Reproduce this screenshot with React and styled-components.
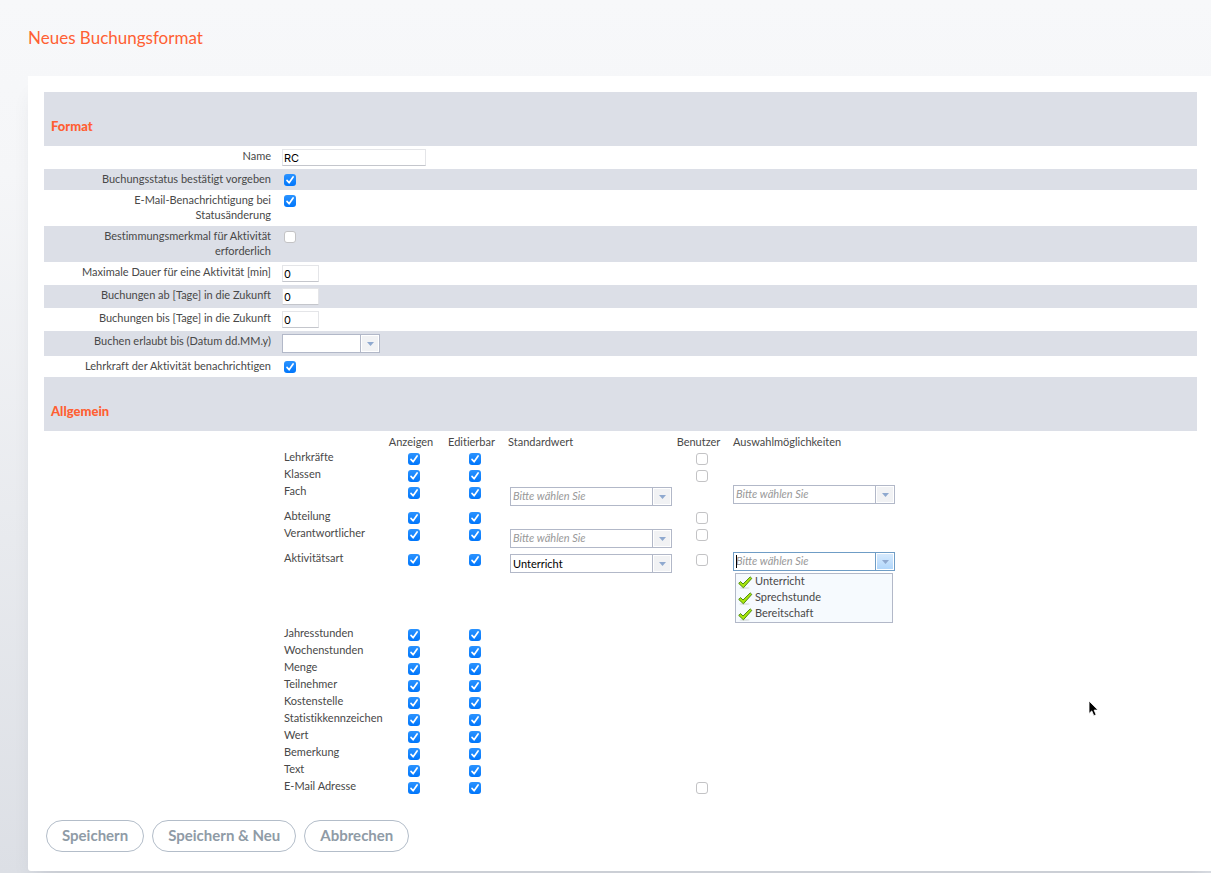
import React, { useId } from "react";
import styled, { createGlobalStyle, css } from "styled-components";

const GlobalStyle = createGlobalStyle`
  * {
    box-sizing: border-box;
  }
  body {
    margin: 0;
    font-family: Lato, "Open Sans", sans-serif;
    font-size: 11px;
    font-variant-ligatures: none;
    line-height: 15px;
    color: #484848;
  }
`;

const Page = styled.div`
  display: flex;
  flex-direction: column;
  position: relative;
  overflow: hidden;
  min-height: 100vh;
  padding: 0 0 2px 28px;
  background: linear-gradient(#f7f8fa 0%, #f5f6f8 20%, #dcdfe5 100%);
`;

const Title = styled.h1`
  margin: 0;
  height: 76px;
  line-height: 76px;
  font-size: 17px;
  font-weight: 400;
  color: #ff5f33;
`;

const Card = styled.form`
  flex: 1;
  padding: 16px 14px 19px 16px;
  background: #fff;
  border-radius: 0 0 0 3px;
  box-shadow: 0 14px 20px -8px rgba(60, 66, 80, 0.15);
`;

const SectionTitle = styled.h2`
  display: flex;
  align-items: flex-end;
  margin: 0;
  height: 54px;
  padding: 0 7px 12px;
  background: #dcdfe7;
  font-size: 13px;
  font-weight: 900;
  line-height: 15px;
  color: #ff5f33;
`;

const Row = styled.div`
  display: flex;
  align-items: flex-start;
  min-height: ${(props) => props.$height}px;
  background: ${(props) => (props.$shaded ? "#dcdfe7" : "#fff")};
`;

const RowLabel = styled.label`
  flex: none;
  width: 228px;
  padding: 2px 1px 4px 27px;
  text-align: right;
`;

const RowField = styled.div`
  padding: ${(props) => (props.$check ? "5px 0 0 12px" : "3px 0 0 10px")};
`;

const TextInput = styled.input`
  display: block;
  width: ${(props) => (props.$short ? 37 : 144)}px;
  height: 17px;
  padding: 0 1px;
  border: 1px solid #e4e5e8;
  border-bottom-color: #c4c6cc;
  background: #fff;
  font-family: Inter, sans-serif;
  font-size: 11px;
  color: #000;
`;

const CheckBox = styled.span`
  position: relative;
  display: block;
  width: 12px;
  height: 12px;

  input {
    appearance: none;
    display: block;
    width: 12px;
    height: 12px;
    margin: 0;
    border: 1px solid #c3c3c5;
    border-radius: 3px;
    background: #fff;
  }
  input:checked {
    border: none;
    background: linear-gradient(#2b93ff, #0076fb);
  }
  svg {
    position: absolute;
    top: 0;
    left: 0;
    display: none;
    pointer-events: none;
  }
  input:checked + svg {
    display: block;
  }
`;

const fieldFrame = css`
  border: 1px solid ${(props) => (props.$open ? "#6f9dc6" : "#b2b8c8")};
`;

const Combo = styled.div`
  ${fieldFrame}
  position: relative;
  display: flex;
  width: ${(props) => (props.$date ? 98 : 162)}px;
  height: 19px;
  background: #fff;

  input,
  select {
    flex: 1;
    min-width: 0;
    margin: 0;
    padding: ${(props) => (props.$empty ? "0 2px 3px" : "0 2px")};
    border: none;
    outline: none;
    appearance: none;
    background: transparent;
    font-family: Lato, sans-serif;
    font-size: 11px;
    font-style: ${(props) => (props.$empty ? "italic" : "normal")};
    color: ${(props) => (props.$empty ? "#999" : "#000")};
  }
  input::placeholder {
    color: #999;
    opacity: 1;
  }
`;

const ComboButton = styled.button`
  flex: none;
  display: flex;
  align-items: center;
  justify-content: center;
  width: 19px;
  padding: 0;
  border: none;
  border-left: 1px solid ${(props) => (props.$open ? "#6f9dc6" : "#b2b8c8")};
  box-shadow: inset 0 0 0 1px #fff;
  background: ${(props) => (props.$open ? "linear-gradient(#d9ebfd, #aed5fb)" : "#f1f2f4")};
`;

const Caret = styled.span`
  position: absolute;
  top: 2px;
  left: 2px;
  width: 1px;
  height: 13px;
  background: #000;
`;

const OptionList = styled.ul`
  width: 158px;
  margin: 2px 0 0 2px;
  padding: 0;
  list-style: none;
  border: 1px solid #b2b8c8;
  background: #f6fafe;
`;

const Option = styled.li`
  display: flex;
  gap: 2px;
  height: 16px;
  padding-left: 2px;
  line-height: 14px;

  svg {
    flex: none;
    margin-top: 2px;
  }
`;

const Matrix = styled.table`
  margin-left: 238px;
  table-layout: fixed;
  width: 615px;
  border-collapse: collapse;

  th,
  td {
    padding: 0;
    font-weight: 400;
    text-align: left;
    vertical-align: top;
    white-space: nowrap;
  }
  thead th {
    height: 19px;
    padding-top: 4px;
    line-height: 14px;
  }
  thead th.center {
    text-align: center;
  }
  tbody th {
    padding-left: 2px;
    line-height: 14px;
  }
`;

const MatrixRow = styled.tr`
  height: ${(props) => props.$height}px;
`;

const HeadCell = styled.th`
  && {
    padding-left: ${(props) => props.$indent}px;
  }
`;

const Col = styled.col`
  width: ${(props) => props.$width}px;
`;

const CheckCell = styled.td`
  && {
    padding: 3px 0 0 6px;
  }
  ${CheckBox} {
    margin: 0 auto;
  }
`;

const DefaultCell = styled.td`
  && {
    padding: 3px 0 0 5px;
  }
`;

const ChoiceCell = styled.td`
  && {
    padding: 1px 0 0 9px;
  }
`;

const Actions = styled.div`
  display: flex;
  gap: 8px;
  padding: 24px 2px 0;
`;

const PillButton = styled.button`
  height: 32px;
  padding: 0 15px 2px;
  border: 1px solid #b3bdc9;
  border-radius: 16px;
  background: #fff;
  font-family: Lato, sans-serif;
  font-size: 15px;
  font-weight: 700;
  color: #8f9ba6;
`;

const Pointer = styled.svg`
  position: absolute;
  top: 700px;
  left: 1088px;
  pointer-events: none;
`;

function Check({ id, label, checked }) {
  return (
    <CheckBox>
      <input type="checkbox" id={id} aria-label={label} defaultChecked={checked} />
      <svg width="12" height="12" viewBox="0 0 12 12" fill="none">
        <path
          d="M3 6.4 5.1 8.8 9.1 3"
          stroke="#fff"
          strokeWidth="1.7"
          strokeLinecap="round"
          strokeLinejoin="round"
        />
      </svg>
    </CheckBox>
  );
}

function Arrow() {
  return (
    <svg width="7" height="4" viewBox="0 0 7 4">
      <path d="M0 0h7L3.5 4z" fill="#8fa9cf" />
    </svg>
  );
}

function TickIcon() {
  return (
    <svg width="15" height="13" viewBox="0 0 15 13">
      <ellipse cx="6.5" cy="12" rx="5" ry="1" fill="#dfe4e4" />
      <path
        d="M.7 7.4 2.6 5.6 5 8 12.2.9 13.8 2.4 5.4 11.8z"
        fill="#a8e60c"
        stroke="#4f8a10"
        strokeWidth="1"
        strokeLinejoin="round"
      />
    </svg>
  );
}

function DefaultSelect({ label, value }) {
  return (
    <Combo $empty={!value}>
      <select aria-label={label} defaultValue={value || ""}>
        <option value="">Bitte wählen Sie</option>
        {value && <option value={value}>{value}</option>}
      </select>
      <ComboButton type="button" aria-label={`${label} öffnen`}>
        <Arrow />
      </ComboButton>
    </Combo>
  );
}

function ChoiceBox({ label, options }) {
  const open = Boolean(options);
  return (
    <>
      <Combo $empty $open={open}>
        <input type="text" aria-label={label} placeholder="Bitte wählen Sie" />
        {open && <Caret />}
        <ComboButton type="button" $open={open} aria-label={`${label} öffnen`}>
          <Arrow />
        </ComboButton>
      </Combo>
      {open && (
        <OptionList>
          {options.map((option) => (
            <Option key={option}>
              <TickIcon />
              {option}
            </Option>
          ))}
        </OptionList>
      )}
    </>
  );
}

const formatRows = [
  { label: "Name", type: "text", value: "RC", height: 23 },
  { label: "Buchungsstatus bestätigt vorgeben", type: "check", value: true, height: 21 },
  { label: "E-Mail-Benachrichtigung bei Statusänderung", type: "check", value: true, height: 36 },
  { label: "Bestimmungsmerkmal für Aktivität erforderlich", type: "check", value: false, height: 36 },
  { label: "Maximale Dauer für eine Aktivität [min]", type: "number", value: "0", height: 23 },
  { label: "Buchungen ab [Tage] in die Zukunft", type: "number", value: "0", height: 23 },
  { label: "Buchungen bis [Tage] in die Zukunft", type: "number", value: "0", height: 23 },
  { label: "Buchen erlaubt bis (Datum dd.MM.y)", type: "date", height: 25 },
  { label: "Lehrkraft der Aktivität benachrichtigen", type: "check", value: true, height: 21 },
];

const fields = [
  { name: "Lehrkräfte", user: true },
  { name: "Klassen", user: true },
  { name: "Fach", preset: true, choice: true, height: 25 },
  { name: "Abteilung", user: true },
  { name: "Verantwortlicher", preset: true, user: true, height: 25 },
  {
    name: "Aktivitätsart",
    preset: true,
    value: "Unterricht",
    user: true,
    choice: true,
    options: ["Unterricht", "Sprechstunde", "Bereitschaft"],
    height: 75,
  },
  { name: "Jahresstunden" },
  { name: "Wochenstunden" },
  { name: "Menge" },
  { name: "Teilnehmer" },
  { name: "Kostenstelle" },
  { name: "Statistikkennzeichen" },
  { name: "Wert" },
  { name: "Bemerkung" },
  { name: "Text" },
  { name: "E-Mail Adresse", user: true },
];

function FormatRow({ row, shaded }) {
  const id = useId();
  return (
    <Row $height={row.height} $shaded={shaded}>
      <RowLabel htmlFor={id}>{row.label}</RowLabel>
      <RowField $check={row.type === "check"}>
        {row.type === "check" && <Check id={id} checked={row.value} />}
        {(row.type === "text" || row.type === "number") && (
          <TextInput id={id} type="text" $short={row.type === "number"} defaultValue={row.value} />
        )}
        {row.type === "date" && (
          <Combo $date>
            <input id={id} type="text" />
            <ComboButton type="button" aria-label="Kalender öffnen">
              <Arrow />
            </ComboButton>
          </Combo>
        )}
      </RowField>
    </Row>
  );
}

function App() {
  return (
    <>
      <GlobalStyle />
      <Page>
        <Title>Neues Buchungsformat</Title>
        <Card onSubmit={(e) => e.preventDefault()}>
          <SectionTitle>Format</SectionTitle>
          {formatRows.map((row, i) => (
            <FormatRow key={row.label} row={row} shaded={i % 2 === 1} />
          ))}
          <SectionTitle>Allgemein</SectionTitle>
          <Matrix>
            <colgroup>
              <Col $width={102} />
              <Col $width={54} />
              <Col $width={67} />
              <Col $width={168} />
              <Col $width={51} />
              <col />
            </colgroup>
            <thead>
              <tr>
                <td />
                <th className="center">Anzeigen</th>
                <th className="center">Editierbar</th>
                <HeadCell $indent={3}>Standardwert</HeadCell>
                <th className="center">Benutzer</th>
                <HeadCell $indent={9}>Auswahlmöglichkeiten</HeadCell>
              </tr>
            </thead>
            <tbody>
              {fields.map((f) => (
                <MatrixRow key={f.name} $height={f.height || 17}>
                  <th scope="row">{f.name}</th>
                  <CheckCell>
                    <Check label={`${f.name} anzeigen`} checked />
                  </CheckCell>
                  <CheckCell>
                    <Check label={`${f.name} editierbar`} checked />
                  </CheckCell>
                  <DefaultCell>
                    {f.preset && <DefaultSelect label={`${f.name} Standardwert`} value={f.value} />}
                  </DefaultCell>
                  <CheckCell>{f.user && <Check label={`${f.name} Benutzer`} />}</CheckCell>
                  <ChoiceCell>
                    {f.choice && <ChoiceBox label={`${f.name} Auswahl`} options={f.options} />}
                  </ChoiceCell>
                </MatrixRow>
              ))}
            </tbody>
          </Matrix>
          <Actions>
            <PillButton type="submit">Speichern</PillButton>
            <PillButton type="button">Speichern &amp; Neu</PillButton>
            <PillButton type="button">Abbrechen</PillButton>
          </Actions>
        </Card>
        <Pointer width="12" height="18" viewBox="0 0 12 18">
          <path
            d="M1 1v12.5l2.8-2.6 2 4.8 2.3-1-2-4.6H10z"
            fill="#000"
            stroke="#fff"
            strokeWidth="0.8"
          />
        </Pointer>
      </Page>
    </>
  );
}

export default App;
